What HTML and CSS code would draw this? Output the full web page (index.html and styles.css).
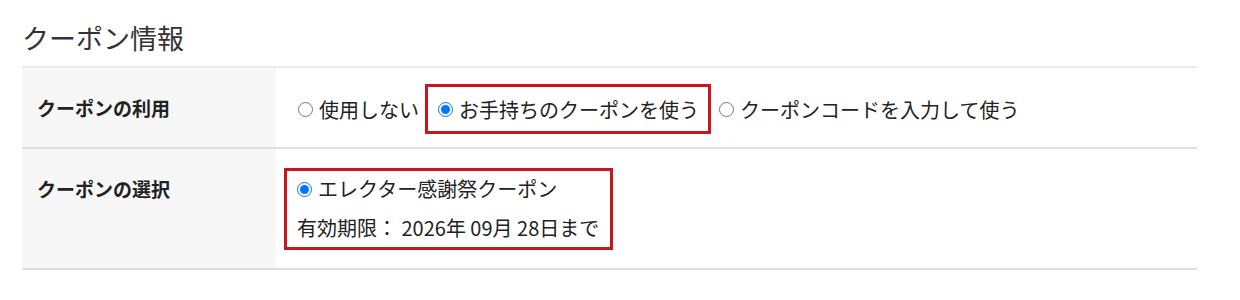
FILE: index.html
```html
<!DOCTYPE html>
<html lang="ja">
<head>
    <meta charset="UTF-8">
    <title>クーポン情報</title>
    <link rel="stylesheet" href="styles.css">
</head>
<body>
    <div class="coupon-section">
        <h2 class="coupon-title">クーポン情報</h2>
        <div class="coupon-table">
            <div class="coupon-row coupon-row-use">
                <div class="coupon-label">クーポンの利用</div>
                <div class="coupon-value">
                    <div class="coupon-options">
                        <label class="coupon-option"><input type="radio" name="coupon_use">使用しない</label>
                        <label class="coupon-option is-selected"><input type="radio" name="coupon_use" checked>お手持ちのクーポンを使う</label>
                        <label class="coupon-option"><input type="radio" name="coupon_use">クーポンコードを入力して使う</label>
                    </div>
                </div>
            </div>
            <div class="coupon-row coupon-row-select">
                <div class="coupon-label">クーポンの選択</div>
                <div class="coupon-value">
                    <div class="coupon-card">
                        <label class="coupon-option"><input type="radio" name="coupon_id" checked>エレクター感謝祭クーポン</label>
                        <div class="coupon-limit">有効期限： 2026年 09月 28日まで</div>
                    </div>
                </div>
            </div>
        </div>
    </div>
</body>
</html>
```

FILE: styles.css
```css
/* Coupon CSS */
body {
    margin: 0;
    font-family: "Noto Sans CJK JP", "Noto Sans", sans-serif;
    color: #222;
    background: #fff;
}
.coupon-section {
    width: 1175px;
    margin-left: 22px;
}
.coupon-title {
    margin: 20px 0 10px;
    font-size: 27px;
    line-height: 36px;
    font-weight: normal;
    color: #333;
}
.coupon-table {
    border-top: 2px solid #ebebeb;
}
.coupon-row {
    display: flex;
    border-bottom: 2px solid #dedede;
}
.coupon-label {
    width: 254px;
    flex-shrink: 0;
    box-sizing: border-box;
    padding: 30px 0 0 15px;
    background-color: #f7f7f7;
    font-size: 19px;
    line-height: 20px;
    font-weight: bold;
}
.coupon-value {
    flex: 1;
    padding-left: 8px;
    font-size: 20px;
    line-height: 29px;
}
.coupon-row-use .coupon-value {
    padding-top: 16px;
    padding-bottom: 13px;
}
.coupon-row-select .coupon-value {
    padding-top: 19px;
    padding-bottom: 18px;
}
.coupon-options {
    display: flex;
    align-items: center;
    gap: 6px;
}
.coupon-option {
    display: flex;
    align-items: center;
    gap: 6px;
    cursor: pointer;
}
.coupon-option input {
    width: 15px;
    height: 15px;
    margin: 0;
}
.coupon-options .coupon-option:first-child {
    margin-left: 14px;
}
.coupon-option.is-selected {
    border: 3px solid #c8161e;
    padding: 8px 9px 7px 10px;
    margin-right: 2px;
}
.coupon-card {
    display: inline-block;
    border: 3px solid #c8161e;
    padding: 8px 11px 9px 10px;
}
.coupon-card .coupon-option {
    line-height: 20px;
}
.coupon-limit {
    margin-top: 19px;
    line-height: 20px;
}
```
